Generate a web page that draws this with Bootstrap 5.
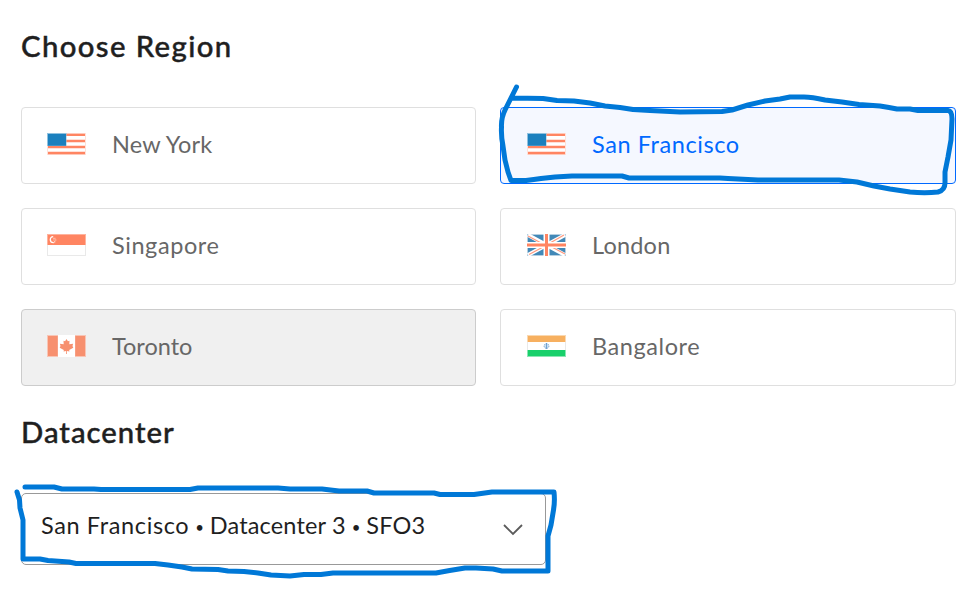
<!DOCTYPE html>
<html lang="en">
<head>
<meta charset="utf-8">
<meta name="viewport" content="width=device-width, initial-scale=1">
<title>Choose Region</title>
<link href="https://cdn.jsdelivr.net/npm/bootstrap@5.3.0/dist/css/bootstrap.min.css" rel="stylesheet">
<style>
body{font-family:Lato,"Open Sans",sans-serif;background:#fff;color:#1f1f1f;height:592px;overflow:hidden}
.page{padding:28px 17px 0 21px}
.heading{font-size:29.3px;line-height:36px;font-weight:500;letter-spacing:1.4px;-webkit-text-stroke:.45px #1f1f1f;margin:0}
.heading.tight{letter-spacing:1px}
.regions{display:grid;grid-template-columns:455px 456px;gap:24px;margin:43px 0 28px}
.region{height:77px;border:1px solid #dfdfdf;border-radius:4px;padding:0 25px 3px;gap:26px;color:#676767;font-size:23.5px;letter-spacing:.57px;background:#fff;text-align:left}
.region:nth-child(even){padding-left:26px}
.region span{padding-top:2px}
.region .narrow{letter-spacing:.2px}
.region .narrower{letter-spacing:0}
.region.selected{border-color:#0069ff;background:#f5f8ff;color:#0069ff}
.region.off{background:#f0f0f0;border-color:#ccc}
.region svg{width:39px;height:22px;flex:none}
.picker{width:525px;height:72px;margin-top:43px;border:1px solid #999;border-radius:5px;padding:0 22px 6px 19px;background:#fff;color:#1f1f1f;font-size:23.5px;letter-spacing:.16px}
.picker .city{letter-spacing:.62px}
.picker .dot{width:20.5px;font-size:15px;text-align:center;letter-spacing:0;margin-top:3px}
.ink{left:0;top:0;pointer-events:none}
</style>
<script src="https://cdn.jsdelivr.net/npm/bootstrap@5.3.0/dist/js/bootstrap.bundle.min.js"></script>
</head>
<body class="position-relative">
<svg width="0" height="0" class="position-absolute">
  <symbol id="us" viewBox="0 0 39 22">
    <path fill="#ffe1d8" d="M0 0h39v22H0z"/><path fill="#fff" d="M1 1h37v20H1z"/>
    <path stroke="#ff8562" stroke-width="2.3" d="M1 1.9h37M1 8h37M1 14h37M1 20h37"/>
    <path fill="#8fc1df" d="M0 0h19.5v13H0z"/><path fill="#1b80be" d="M1 1h18v11.7H1z"/>
  </symbol>
</svg>
<main class="page">
  <h2 class="heading">Choose Region</h2>
  <div class="regions">
    <button class="region d-flex align-items-center"><svg><use href="#us"/></svg><span class="narrow">New York</span></button>
    <button class="region selected d-flex align-items-center"><svg><use href="#us"/></svg><span>San Francisco</span></button>
    <button class="region d-flex align-items-center">
      <svg viewBox="0 0 39 22"><path fill="#e9e9e9" d="M0 0h39v22H0z"/><path fill="#fff" d="M1 1h37v20H1z"/><path fill="#ffb39d" d="M0 0h39v11H0z"/><path fill="#ff8562" d="M1 1h37v10H1z"/><path fill="none" stroke="#fff" stroke-width="1.3" d="M6.2 2.6C2.200 2.600 2.200 8.800 6.800 8.600"/><path stroke="#ffe3da" stroke-width="1.2" stroke-dasharray="1 .7" d="M6.500 4.300h2M6.500 6h3.500M7 7.800h2"/></svg>
      <span>Singapore</span></button>
    <button class="region d-flex align-items-center">
      <svg viewBox="0 0 39 22"><path fill="#b5cfe1" d="M0 0h39v22H0z"/><path fill="#4288b7" d="M1 1h37v20H1z"/><path stroke="#fff" stroke-width="4" d="M1 1l37 20M38 1L1 21"/><path stroke="#ff9b80" stroke-width="1.3" d="M1 2l15 8M23 12l15 8M37 1L23 9M16 13L2 20.5"/><path stroke="#fff" stroke-width="6" d="M19.5 0v22M0 11h39"/><path stroke="#ff8562" stroke-width="3" d="M19.5 0v22M0 11h39"/></svg>
      <span class="narrow">London</span></button>
    <button class="region off d-flex align-items-center">
      <svg viewBox="0 0 39 22"><path fill="#f8c5b5" d="M0 0h39v22H0z"/><path fill="#fff" d="M11 0h17v22H11z"/><path fill="#f7906f" d="M1 1h9.7v20H1zM28.3 1H38v20h-9.7z"/><path fill="#f7906f" d="M19.5 4l1.4 2.3 1.6-.5-.2 3.400 3.800-.4-.6 2.200.8 1.800-4.100 2.300.2 1.400-2.500-.4V19h-.8v-2.900l-2.500.4.2-1.400-4.100-2.300.8-1.800-.6-2.200 3.800.4-.2-3.400 1.600.5z"/></svg>
      <span class="narrower">Toronto</span></button>
    <button class="region d-flex align-items-center">
      <svg viewBox="0 0 39 22"><path fill="#fad8b0" d="M0 0h39v7H0z"/><path fill="#8be6b5" d="M0 15h39v7H0z"/><path fill="#e9e9e9" d="M0 7h39v8H0z"/><path fill="#fff" d="M1 7h37v8H1z"/><path fill="#f7b060" d="M1 1h37v6H1z"/><path fill="#18d06b" d="M1 15h37v6H1z"/><circle cx="19.5" cy="11" r="2.4" fill="#c9dff2" stroke="#7fa9d3" stroke-width="1" stroke-dasharray="1.2 .7"/><path stroke="#5a93cb" stroke-width=".8" d="M19.5 8v6"/></svg>
      <span>Bangalore</span></button>
  </div>
  <h2 class="heading tight">Datacenter</h2>
  <button class="picker d-flex align-items-center justify-content-between">
    <span class="d-flex align-items-center"><span class="city">San Francisco</span><span class="dot">•</span><span>Datacenter 3</span><span class="dot">•</span><span>SFO3</span></span>
    <svg width="20" height="12" viewBox="0 0 20 12" fill="none" stroke="#5b5b5b" stroke-width="1.8" class="mt-2"><path d="M1 1l9 9 9-9"/></svg>
  </button>
</main>
<!-- Hand-drawn marker outlines over the chosen region and datacenter -->
<svg class="ink position-absolute" width="973" height="592" fill="none" stroke="#0078d7" stroke-width="5" stroke-linecap="round" stroke-linejoin="round">
  <path d="M516.5 87L511 98L505.500 109Q501 118 501.500 127Q501 136 503 146L505 160L508 172L511 180.500L526 180.500Q534 179.500 541 178.500L555 177L572 176L622 176L629 178L720 178L728 178.500L758 180L839 180L857 182L874 186L890 189L910 192Q925 193.500 938 192Q945 190 945 183L945 172L948 157L951 140L952 119Q952 111 948 110.500L918 110.500L910 109L897 109L889 107.500L880 106L859 104.500L842 102L825 100Q812 97 804 97L790 97L780 99L765 101L748 105L732 110L722 111.500L680 112L650 110.500L633 109.500L620 107.500L605 106L590 103L574 101L557 100.500L543 98.500L512 98"/>
  <path d="M25 487L54 487L62 489L94 489L101 489.500L190 489.500L198 488L278 488L290 489L322 489L339 491L367 491L374 493L434 493L440 494.500L474 494.500L492 492L554 492Q555 501 553.500 510L551 525L548 536L548 571L502 571L493 569L476 568L465 568Q452 570 436 573L333 573L321 574.500L304 574.500L290 576L271 575L258 573L244 571.500L228 571L218 569.500L192 569L182 567L168 565L155 563.500L76 563.500L69 562L48 560.500L40 559L23 559L23 520L20 508L19.500 500L17 492"/>
</svg>
</body>
</html>
